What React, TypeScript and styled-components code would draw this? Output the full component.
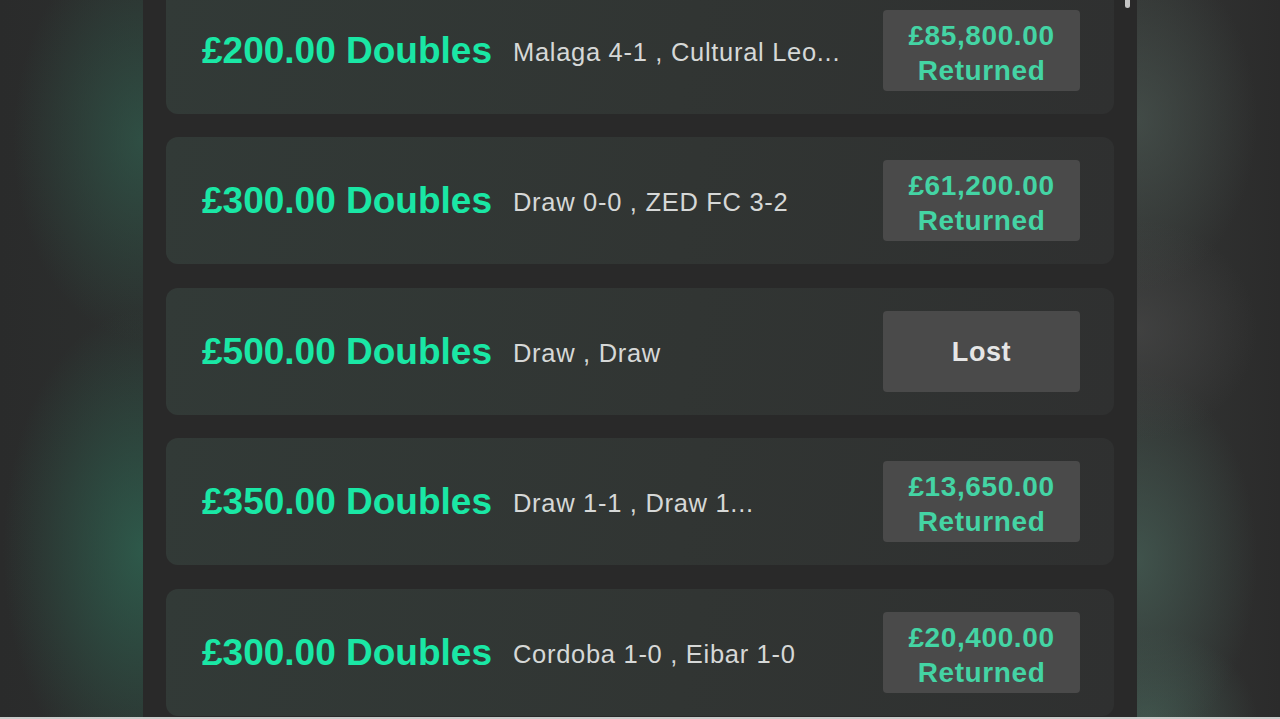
import React from "react";
import styled, { createGlobalStyle } from "styled-components";

const GlobalStyle = createGlobalStyle`
  html, body {
    margin: 0;
    padding: 0;
    background: #2b2c2c;
    overflow: hidden;
  }
  body {
    font-family: "Liberation Sans", Arial, sans-serif;
  }
`;

const Page = styled.div`
  width: 1280px;
  height: 719px;
  display: flex;
  flex-direction: column;
  overflow: hidden;
`;

const Stage = styled.div`
  flex: 1;
  display: flex;
  min-height: 0;
`;

const BottomEdge = styled.div`
  height: 2px;
  background: #c9cbca;
`;

const Side = styled.div<{ $side: "left" | "right" }>`
  width: 143px;
  flex: none;
  background: ${(p) =>
    p.$side === "left"
      ? `radial-gradient(ellipse 130px 200px at 143px 140px, rgba(48,92,77,0.7), rgba(48,92,77,0) 100%),
         radial-gradient(ellipse 140px 240px at 143px 550px, rgba(46,96,79,0.85), rgba(46,96,79,0) 100%),
         linear-gradient(90deg, #2a2b2b, #2c2f2e)`
      : `radial-gradient(ellipse 120px 170px at 0px 120px, rgba(72,84,79,0.7), rgba(72,84,79,0) 100%),
         radial-gradient(ellipse 120px 110px at 0px 330px, rgba(70,70,70,0.7), rgba(70,70,70,0) 100%),
         radial-gradient(ellipse 120px 190px at 0px 560px, rgba(66,88,80,0.85), rgba(66,88,80,0) 100%),
         radial-gradient(ellipse 110px 90px at 10px 719px, rgba(66,90,81,0.8), rgba(66,90,81,0) 100%),
         linear-gradient(90deg, #333534, #2b2b2b)`};
`;

const Panel = styled.div`
  position: relative;
  width: 994px;
  flex: none;
  background: #292929;
  padding: 0 23px;
  box-sizing: border-box;
  overflow: hidden;
`;

const ScrollThumb = styled.div`
  position: absolute;
  top: -4px;
  right: 7px;
  width: 5px;
  height: 12px;
  border-radius: 3px;
  background: #c4c4c4;
`;

const List = styled.div`
  display: flex;
  flex-direction: column;
  gap: 23.4px;
  margin-top: -13px;
`;

const Card = styled.div`
  height: 127px;
  flex: none;
  border-radius: 12px;
  background: linear-gradient(100deg, #323a37 0%, #313533 55%, #2f3030 100%);
  display: flex;
  align-items: center;
  padding: 0 34px 0 36px;
`;

const Info = styled.div`
  flex: 1;
  display: flex;
  align-items: center;
  gap: 21px;
  min-width: 0;
`;

const Title = styled.span`
  font-size: 37px;
  font-weight: 700;
  color: #1ae7a5;
  white-space: nowrap;
  padding-top: 1px;
`;

const Legs = styled.span`
  font-size: 25.5px;
  letter-spacing: 0.7px;
  color: #d6d8d7;
  white-space: nowrap;
  padding-top: 4px;
`;

const Badge = styled.div<{ $lost?: boolean }>`
  flex: none;
  height: 81px;
  min-width: 197px;
  box-sizing: border-box;
  padding: ${(p) => (p.$lost ? "2px" : "5px")} 24px 0;
  border-radius: 4px;
  background: #4a4a4a;
  display: flex;
  flex-direction: column;
  align-items: center;
  justify-content: center;
  font-weight: 700;
  font-size: ${(p) => (p.$lost ? "27px" : "28px")};
  letter-spacing: 0.6px;
  line-height: 35px;
  color: ${(p) => (p.$lost ? "#e6e6e6" : "#44d4a4")};
  white-space: nowrap;
`;

type Bet = {
  stake: string;
  legs: string;
  returned?: string;
};

const bets: Bet[] = [
  { stake: "£200.00", legs: "Malaga 4-1 , Cultural Leo...", returned: "£85,800.00" },
  { stake: "£300.00", legs: "Draw 0-0 , ZED FC 3-2", returned: "£61,200.00" },
  { stake: "£500.00", legs: "Draw , Draw" },
  { stake: "£350.00", legs: "Draw 1-1 , Draw 1...", returned: "£13,650.00" },
  { stake: "£300.00", legs: "Cordoba 1-0 , Eibar 1-0", returned: "£20,400.00" },
];

export default function App() {
  return (
    <>
      <GlobalStyle />
      <Page>
        <Stage>
          <Side $side="left" />
          <Panel>
            <ScrollThumb />
            <List>
              {bets.map((b, i) => (
                <Card key={i}>
                  <Info>
                    <Title>{b.stake} Doubles</Title>
                    <Legs>{b.legs}</Legs>
                  </Info>
                  {b.returned ? (
                    <Badge>
                      <span>{b.returned}</span>
                      <span>Returned</span>
                    </Badge>
                  ) : (
                    <Badge $lost>Lost</Badge>
                  )}
                </Card>
              ))}
            </List>
          </Panel>
          <Side $side="right" />
        </Stage>
        <BottomEdge />
      </Page>
    </>
  );
}
